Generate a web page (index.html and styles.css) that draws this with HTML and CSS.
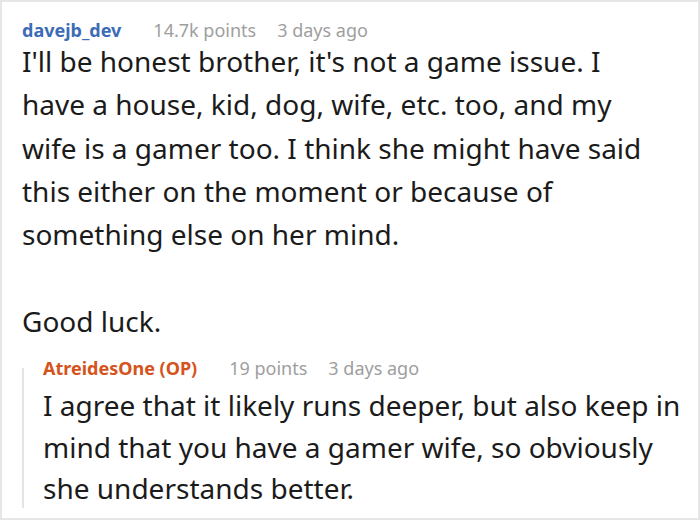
FILE: index.html
```html
<!DOCTYPE html>
<html>
<head>
<meta charset="utf-8">
<link rel="stylesheet" href="styles.css">
</head>
<body>
<div class="frame">
  <div class="comment">
    <div class="meta">
      <span class="user">davejb_dev</span>
      <span class="info">14.7k points</span>
      <span class="info">3 days ago</span>
    </div>
    <div class="body main-body">
      <p>I'll be honest brother, it's not a game issue. I have a house, kid, dog, wife, etc. too, and my wife is a gamer too. I think she might have said this either on the moment or because of something else on her mind.</p>
      <p>Good luck.</p>
    </div>
    <div class="reply">
      <div class="meta">
        <span class="user op">AtreidesOne (OP)</span>
        <span class="info">19 points</span>
        <span class="info">3 days ago</span>
      </div>
      <div class="body reply-body">
        <p>I agree that it likely runs deeper, but also keep in mind that you have a gamer wife, so obviously she understands better.</p>
      </div>
    </div>
  </div>
</div>
</body>
</html>
```
FILE: styles.css
```css
html, body {
  margin: 0;
  padding: 0;
  background: #fff;
}
.frame {
  box-sizing: border-box;
  width: 700px;
  height: 520px;
  border: 2px solid #e6e6e6;
  overflow: hidden;
  font-family: "Noto Sans", "Open Sans", sans-serif;
  color: #1b1b1b;
}
.comment {
  padding: 16px 8px 0 20px;
}
.meta {
  display: flex;
  gap: 21px;
  font-size: 18px;
  line-height: 24px;
  align-items: baseline;
  white-space: nowrap;
}
.user {
  font-weight: bold;
  color: #3d6cb6;
  margin-right: 11px;
}
.user.op {
  color: #d5531c;
}
.info {
  color: #9e9e9e;
}
.body {
  font-size: 28px;
}
.body p {
  margin: 0;
}
.main-body {
  margin-top: -2px;
  line-height: 43.3px;
  max-width: 640px;
}
.main-body p + p {
  margin-top: 43.3px;
}
.reply {
  position: relative;
  margin-top: 13px;
  padding-left: 21px;
}
.reply::before {
  content: "";
  position: absolute;
  left: 0;
  top: 12px;
  bottom: 2px;
  width: 2px;
  background: #e4e4e4;
}
.reply-body {
  margin-top: 5px;
  line-height: 41.5px;
}
```
